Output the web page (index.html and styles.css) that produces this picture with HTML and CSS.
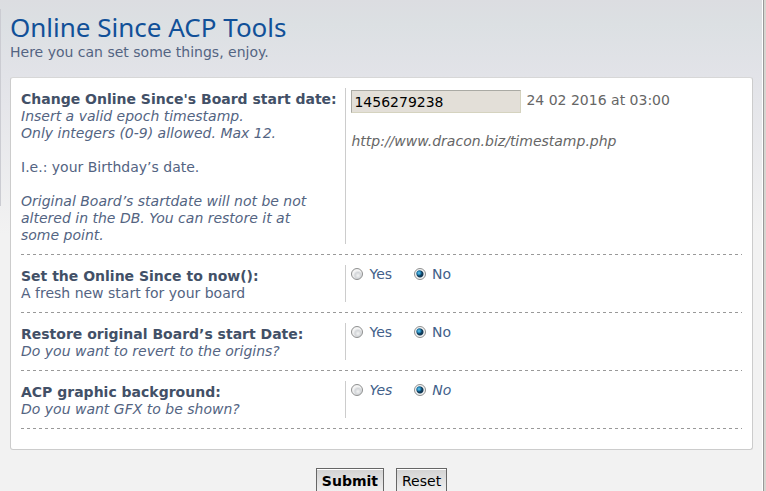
FILE: index.html
```html
<!DOCTYPE html>
<html lang="en">
<head>
<meta charset="utf-8">
<title>Online Since ACP Tools</title>
<link rel="stylesheet" href="styles.css">
</head>
<body>
<div class="page">
<div class="rail"></div>
<main class="main">
  <h1>Online Since ACP Tools</h1>
  <p class="intro">Here you can set some things, enjoy.</p>
  <form>
    <div class="panel">
      <div class="row">
        <div class="term">
          <label class="name" for="stamp">Change Online Since's Board start date:</label>
          <em>Insert a valid epoch timestamp.<br>Only integers (0-9) allowed. Max 12.</em><br><br>
          I.e.: your Birthday’s date.<br><br>
          <em>Original Board’s startdate will not be not altered in the DB. You can restore it at some point.</em>
        </div>
        <div class="value">
          <div class="stamp-line">
            <input class="stamp" id="stamp" type="text" maxlength="12" value="1456279238">
            <span>24 02 2016 at 03:00</span>
          </div>
          <em class="site">http://www.dracon.biz/timestamp.php</em>
        </div>
      </div>
      <div class="row" role="group" aria-labelledby="now">
        <div class="term"><strong class="name" id="now">Set the Online Since to now():</strong>A fresh new start for your board</div>
        <div class="value choices">
          <label><input type="radio" name="now">Yes</label>
          <label><input type="radio" name="now" checked>No</label>
        </div>
      </div>
      <div class="row" role="group" aria-labelledby="restore">
        <div class="term"><strong class="name" id="restore">Restore original Board’s start Date:</strong><em>Do you want to revert to the origins?</em></div>
        <div class="value choices">
          <label><input type="radio" name="restore">Yes</label>
          <label><input type="radio" name="restore" checked>No</label>
        </div>
      </div>
      <div class="row" role="group" aria-labelledby="gfx">
        <div class="term"><strong class="name" id="gfx">ACP graphic background:</strong><em>Do you want GFX to be shown?</em></div>
        <div class="value choices slanted">
          <label><input type="radio" name="gfx">Yes</label>
          <label><input type="radio" name="gfx" checked>No</label>
        </div>
      </div>
    </div>
    <div class="actions">
      <button class="submit" type="submit">Submit</button>
      <button type="reset">Reset</button>
    </div>
  </form>
</main>
</div>
</body>
</html>
```
FILE: styles.css
```css
* {
  box-sizing: border-box;
}

body {
  margin: 0;
  height: 100vh;
  overflow: hidden;
  background: #f2f2f2;
  color: #536482;
  font: 14px/17px Verdana, "DejaVu Sans", sans-serif;
}

.page {
  display: flex;
  min-height: 100vh;
  background: linear-gradient(#dcdde1 0, #dce0e3 24px, #e2e3e8 75px, #f2f2f2 235px);
  border-right: 2px solid #d8d5d0;
}

.rail {
  width: 1px;
  height: 197px;
  margin-top: 9px;
  background: #cbccd2;
}

.main {
  flex: 1;
  padding: 10px 10px 0 9px;
  border-right: 1px solid #999;
  box-shadow: inset -1px 0 #fff;
}

h1 {
  margin: 0;
  color: #115098;
  font: 26px/34px "Trebuchet MS", "Noto Sans", sans-serif;
}

.intro {
  margin: 0 0 16px;
}

.panel {
  padding: 10px 10px 20px;
  background: #fff;
  border: 1px solid #ccc;
  border-top-color: #d7d7d7;
  border-radius: 3px;
}

.row {
  display: flex;
  padding-bottom: 11px;
  margin-bottom: 10px;
  background: repeating-linear-gradient(90deg, #999 0 3px, transparent 3px 6px) bottom / 100% 1px no-repeat;
}

.row:last-child {
  margin-bottom: 0;
}

.term {
  width: 45%;
  padding: 3px 24px 0 0;
}

.name {
  display: block;
  color: #425067;
  font-weight: bold;
  white-space: nowrap;
}

.value {
  flex: 1;
  padding-left: 5px;
  border-left: 1px solid #ccc;
}

.stamp-line {
  display: flex;
  gap: 5px;
  padding-top: 2px;
  color: #666;
  line-height: 20px;
}

.stamp {
  width: 170px;
  height: 23px;
  padding: 2px;
  border: 1px solid #d5d3bf;
  border-top-color: #aaaaa4;
  border-left-color: #aaaaa4;
  background: #e3dfd8;
  color: #000;
  font: inherit;
}

.site {
  display: block;
  margin-top: 20px;
  color: #666;
}

.choices {
  display: flex;
  gap: 22px;
  color: #425f8a;
}

.choices label {
  display: flex;
  align-items: center;
  gap: 6px;
  height: 18px;
}

.slanted {
  font-style: italic;
}

input[type="radio"] {
  appearance: none;
  width: 12px;
  height: 12px;
  margin: 0;
  border: 1px solid #8e8f8f;
  border-radius: 50%;
  background: radial-gradient(circle at 60% 65%, #f4f4f4, #d2d5d8 3px, #f4f4f4 5px);
}

input[type="radio"]:checked {
  background: radial-gradient(circle at 40% 40%, #6fd0f5 0, #1a78ab 2px, transparent 3px), radial-gradient(circle, #123a57 3px, #f4f4f4 4px);
}

.actions {
  display: flex;
  justify-content: center;
  gap: 12px;
  padding-top: 18px;
}

button {
  height: 26px;
  padding: 0 5px;
  border: 1px solid #666;
  background: linear-gradient(#d2d2d2, #efefef 22px);
  box-shadow: inset 0 1px #fff;
  color: #000;
  font: 14px/24px Verdana, "DejaVu Sans", sans-serif;
}

.submit {
  font-weight: bold;
}
```
